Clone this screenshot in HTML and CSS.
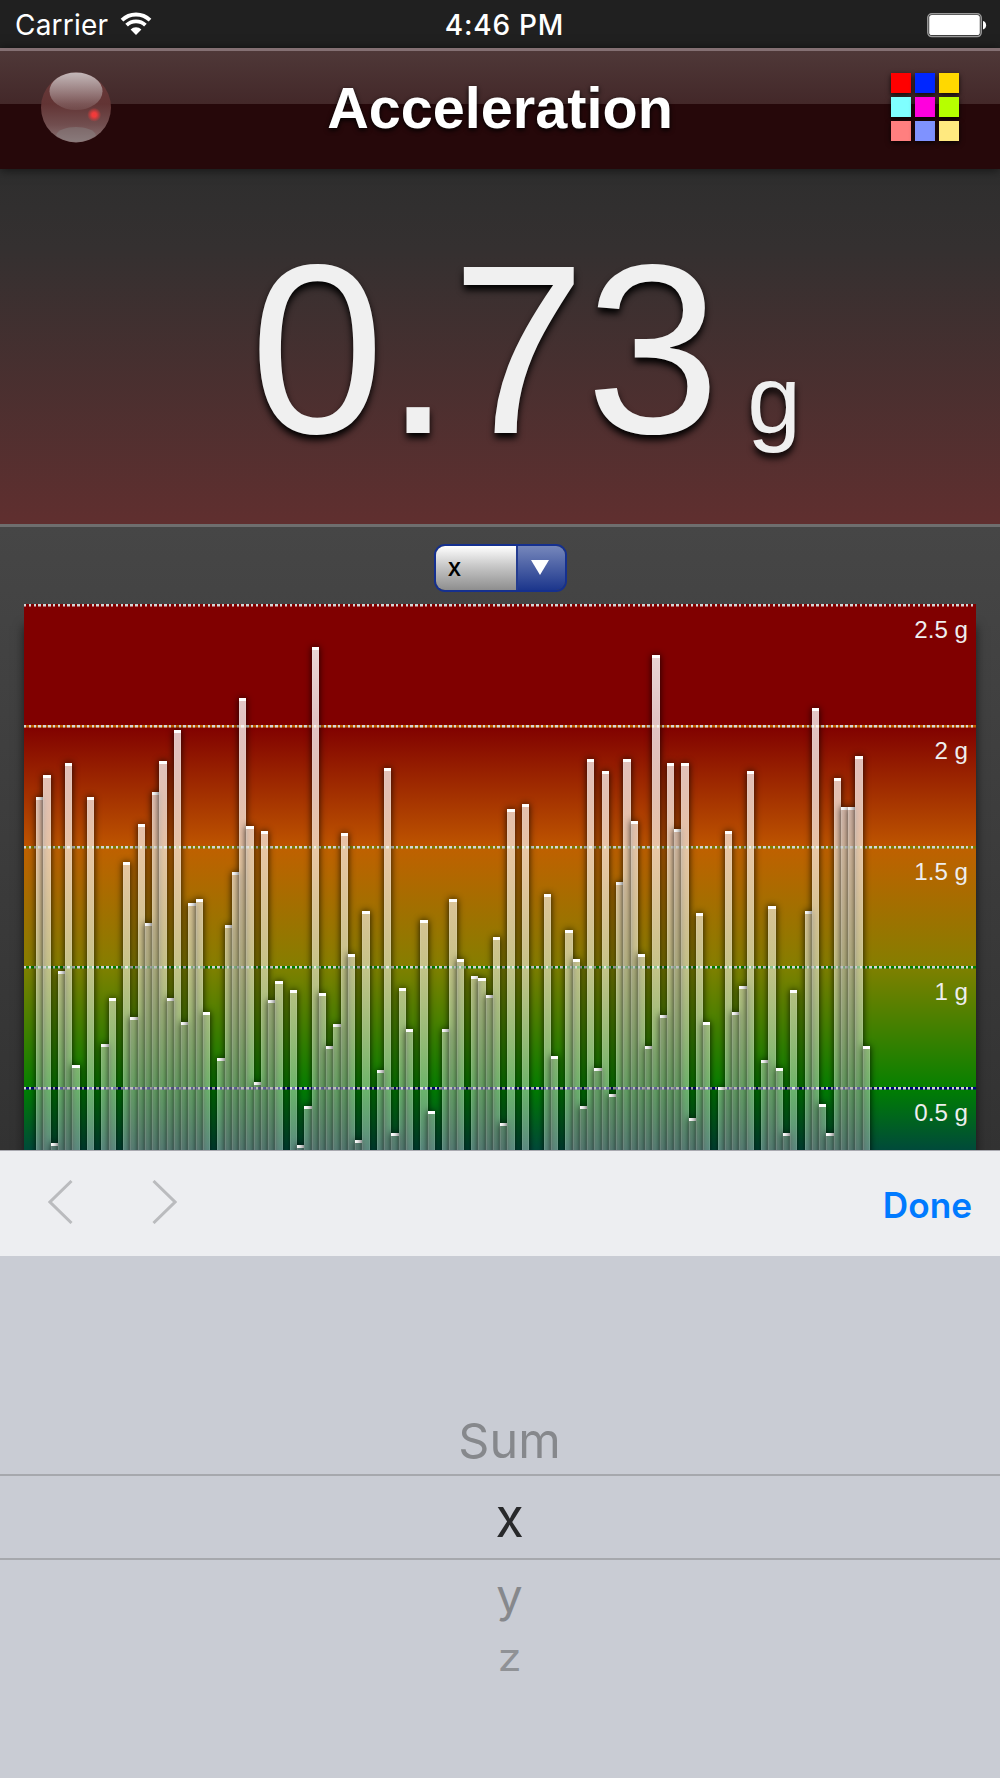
FILE: index.html
```html
<!DOCTYPE html>
<html lang="en">
<head>
<meta charset="utf-8">
<title>Acceleration</title>
<link rel="stylesheet" href="styles.css">
</head>
<body>
<div class="status">
  <div class="status-left">
    <span class="carrier">Carrier</span>
    <svg class="wifi" width="32" height="24" viewBox="0 0 32 24">
      <g fill="none" stroke="#fff" stroke-width="3.8">
        <path d="M2 8.2A20 20 0 0 1 30 8.2"/>
        <path d="M6.6 13.2A13.6 13.6 0 0 1 25.4 13.2"/>
      </g>
      <path d="M16 23L10.6 17.6A7.4 7.4 0 0 1 21.4 17.6Z" fill="#fff"/>
    </svg>
  </div>
  <div class="clock">4:46 PM</div>
  <svg class="battery" width="60" height="25" viewBox="0 0 60 25">
    <rect x="0.8" y="0.8" width="53.4" height="22.8" rx="4" fill="none" stroke="#9a9a9a" stroke-width="1.5"/>
    <rect x="2.2" y="2" width="50.6" height="20" rx="2.6" fill="#fff"/>
    <path d="M56 8a4.4 4.4 0 0 1 0 8.4z" fill="#fff"/>
  </svg>
</div>
<header class="header">
  <svg class="ball" width="70" height="71" viewBox="0 0 70 71">
    <defs>
      <linearGradient id="body" x1="0" y1="0" x2="0" y2="1">
        <stop offset="0" stop-color="#6a3a3a"/><stop offset="0.45" stop-color="#623434"/><stop offset="0.75" stop-color="#714e4f"/><stop offset="1" stop-color="#8b7475"/>
      </linearGradient>
      <linearGradient id="shine" x1="0" y1="0" x2="0" y2="1">
        <stop offset="0" stop-color="#c3b8b9"/><stop offset="1" stop-color="#c3b8b9" stop-opacity="0.12"/>
      </linearGradient>
      <radialGradient id="dot">
        <stop offset="0.3" stop-color="#f23a3a"/><stop offset="1" stop-color="#f23a3a" stop-opacity="0"/>
      </radialGradient>
    </defs>
    <circle cx="35" cy="35.5" r="35" fill="url(#body)"/>
    <ellipse cx="35" cy="19.3" rx="26.5" ry="18.8" fill="url(#shine)"/>
    <path d="M15 63.5C17 52 53 52 55 63.5A35 35 0 0 1 15 63.5Z" fill="#8a8484" fill-opacity="0.45"/>
    <circle cx="53.2" cy="42.8" r="7" fill="url(#dot)"/>
  </svg>
  <h1 class="title">Acceleration</h1>
  <div class="swatches">
    <i class="red"></i><i class="blue"></i><i class="gold"></i>
    <i class="cyan"></i><i class="magenta"></i><i class="lime"></i>
    <i class="salmon"></i><i class="periwinkle"></i><i class="cream"></i>
  </div>
</header>
<section class="display"><span class="value">0.73</span><span class="unit">g</span></section>
<main class="panel">
  <div class="select">
    <span class="select-text">x</span>
    <span class="select-arrow"><svg width="18" height="15" viewBox="0 0 18 15"><path d="M0 0H18L9 15Z" fill="#fff"/></svg></span>
  </div>
  <div class="chart">
    <div class="zone z5">2.5 g</div>
    <div class="zone z4">2 g</div>
    <div class="zone z3">1.5 g</div>
    <div class="zone z2">1 g</div>
    <div class="zone z1">0.5 g</div>
    <div class="bars" id="bars"></div>
  </div>
</main>
<div class="toolbar">
  <div class="arrows">
    <svg width="25" height="44" viewBox="0 0 25 44"><path d="M23.5 1L2 22L23.5 43" fill="none" stroke="#babbbe" stroke-width="3"/></svg>
    <svg width="25" height="44" viewBox="0 0 25 44"><path d="M1.5 1L23 22L1.5 43" fill="none" stroke="#babbbe" stroke-width="3"/></svg>
  </div>
  <span class="done">Done</span>
</div>
<div class="picker">
  <div class="option above"><span>Sum</span></div>
  <div class="option selected"><span>x</span></div>
  <div class="option below"><span>y</span></div>
  <div class="option last"><span>z</span></div>
</div>
<script src="chart.js"></script>
</body>
</html>
```
FILE: styles.css
```css
* { box-sizing: border-box; }
body {
  margin: 0;
  width: 1000px;
  height: 1778px;
  overflow: hidden;
  display: flex;
  flex-direction: column;
  background: #c9ccd4;
  font-family: "Liberation Sans", Arial, sans-serif;
}
.status {
  flex: none;
  height: 48px;
  padding: 2px 13px 0 15px;
  display: grid;
  grid-template-columns: 1fr auto 1fr;
  align-items: center;
  background: #202020;
  color: #fff;
  font: 400 28px/46px Inter, sans-serif;
}
.status-left { display: flex; align-items: center; gap: 12px; }
.carrier { letter-spacing: 0.2px; }
.wifi { margin-top: -2px; }
.clock { font-weight: 500; margin-left: 7px; letter-spacing: 0.8px; }
.battery { justify-self: end; }
.header {
  flex: none;
  height: 121px;
  padding: 0 41px 6px 41px;
  display: flex;
  align-items: center;
  justify-content: space-between;
  border-top: 3px solid #847073;
  background: linear-gradient(#4f3838, #432829 53px, #26080a 53px);
  position: relative;
  box-shadow: 0 1px 10px rgba(0, 0, 0, .6);
}
.title {
  margin: 2px 2px 0 0;
  font-size: 57.6px;
  line-height: 66px;
  font-weight: 700;
  color: #fff;
  text-shadow: 0 2px 5px #000;
}
.swatches {
  display: grid;
  grid-template-columns: repeat(3, 20px);
  grid-auto-rows: 20px;
  gap: 4px;
  margin-top: -1px;
}
.swatches i { box-shadow: 0 2px 5px rgba(0, 0, 0, .8); }
.red { background: #f00; }
.blue { background: #0026ff; }
.gold { background: #ffd800; }
.cyan { background: #7fffff; }
.magenta { background: #f0d; }
.lime { background: #b6ff00; }
.salmon { background: #ff7f7f; }
.periwinkle { background: #7f92ff; }
.cream { background: #ffe97f; }
.display {
  flex: none;
  height: 358px;
  padding: 42px 0 0 51px;
  display: flex;
  justify-content: center;
  align-items: baseline;
  gap: 27px;
  color: #f0f0f0;
  background: linear-gradient(#2e2e2e, #343030 22%, #602f2f);
  border-bottom: 3px solid #6e6e6e;
  text-shadow: 0 5px 7px #000;
}
.value { font-size: 241.5px; line-height: 276px; }
.unit { font-size: 96.6px; }
.panel {
  flex: none;
  height: 623px;
  padding: 17px 24px 0;
  display: flex;
  flex-direction: column;
  align-items: center;
  gap: 12px;
  overflow: hidden;
  background: linear-gradient(#464646, #323232);
}
.select {
  flex: none;
  width: 133px;
  height: 48px;
  display: flex;
  border: 2px solid #15308f;
  border-radius: 11px;
  overflow: hidden;
}
.select-text {
  width: 80px;
  padding-left: 12px;
  font: 500 25px/43px Inter, sans-serif;
  color: #000;
  background: linear-gradient(#fff, #c8c8c8 45%, #8e8e8e);
}
.select-arrow {
  flex: 1;
  padding: 0 3px 2px 0;
  display: flex;
  align-items: center;
  justify-content: center;
  border-left: 2px solid #243c90;
  background: linear-gradient(#7687bb, #1c368c);
}
.chart {
  position: relative;
  flex: none;
  width: 952px;
  display: grid;
  grid-template-rows: repeat(5, 120.775px);
  box-shadow: 0 22px 10px rgba(0, 0, 0, .6);
}
.zone {
  padding: 12px 8px 0;
  text-align: right;
  font-size: 24.15px;
  line-height: 28px;
  color: #eee;
  --dots: repeating-linear-gradient(90deg, #d5d5d5 0 2.415px, transparent 2.415px 4.831px);
  background: var(--dots) 0 0 / 100% 2.5px no-repeat, linear-gradient(var(--edge), var(--edge)) 0 0 / 100% 2.5px no-repeat, linear-gradient(var(--from), var(--to));
}
.z5 { --from: #800000; --to: #800000; --edge: #800000; }
.z4 { --from: #800000; --to: #bd5400; --edge: #c06000; }
.z3 { --from: #c06000; --to: #867e00; --edge: #808000; }
.z2 { --from: #808000; --to: #088000; --edge: #008000; }
.z1 { --from: #008000; --to: #001870; --edge: #000080; }
.bars {
  position: absolute;
  inset: 0;
  padding-left: 12.23px;
  display: flex;
  align-items: flex-end;
  overflow: hidden;
}
.bar {
  flex: none;
  width: 7.25px;
  border: 1px solid rgba(255, 255, 255, .1);
  border-width: 0 1px;
  background: linear-gradient(#fff 2.6px, transparent 2.6px), linear-gradient(rgba(255, 255, 255, .88), rgba(255, 255, 255, .3)) 0 100% / 100% 604px no-repeat;
  background-origin: border-box;
  box-shadow: 0 0 7px rgba(0, 0, 0, .85);
}
.bar.empty { visibility: hidden; }
.toolbar {
  flex: none;
  height: 106px;
  padding: 0 28px 0 48px;
  display: flex;
  align-items: center;
  justify-content: space-between;
  background: #edeef1;
  border-top: 1px solid #a9a9b0;
}
.arrows { display: flex; gap: 79px; margin-top: -3px; }
.done { font: 600 35.2px/40px Inter, sans-serif; color: #007aff; margin-top: 3px; }
.picker {
  flex: 1;
  padding: 149px 0 0;
  display: flex;
  flex-direction: column;
  font-family: Inter, sans-serif;
  font-size: 47px;
  color: #86888c;
}
.option { padding-left: 19px; text-align: center; }
.option span { display: inline-block; }
.above { height: 69px; line-height: 71px; }
.above span { font-size: 48.5px; }
.selected { height: 86px; line-height: 84px; border: solid #a6a8ad; border-width: 2px 0; color: #28292b; }
.selected span { font-size: 54px; transform: scaleX(.96); }
.below { height: 70px; line-height: 71px; }
.below span { transform: scaleY(.96); }
.last { height: 60px; line-height: 55px; font-size: 43px; }
.last span { transform: scaleY(.87); color: #909296; }
```
FILE: chart.js
```js
const samples = [
  170, 179, 27, 98, 184, 59, null, 170, null, 68, 87, null, 143, 79, 159, 118, 172, 185, 87, 198,
  77, 126, 128, 81, null, 62, 117, 139, 211, 158, 52, 156, 86, 94, null, 90, 26, 42, 232, 89,
  67, 76, 155, 105, 28, 123, null, 57, 182, 31, 91, 74, null, 119, 40, null, 74, 128, 103, null,
  96, 95, 88, 112, 35, 165, null, 167, null, null, 130, 63, null, 115, 103, 42, 186, 58, 181, 47,
  135, 186, 160, 105, 67, 229, 80, 184, 157, 184, 37, 122, 77, null, 50, 156, 81, 92, 181, null,
  61, 125, 58, 31, 90, null, 123, 207, 43, 31, 178, 166, 166, 187, 67
];
const PX_PER_UNIT = 2.4155;
const bars = document.getElementById("bars");
for (const value of samples) {
  const bar = document.createElement("div");
  bar.className = value === null ? "bar empty" : "bar";
  bar.style.height = (value || 0) * PX_PER_UNIT + "px";
  bars.append(bar);
}
```
